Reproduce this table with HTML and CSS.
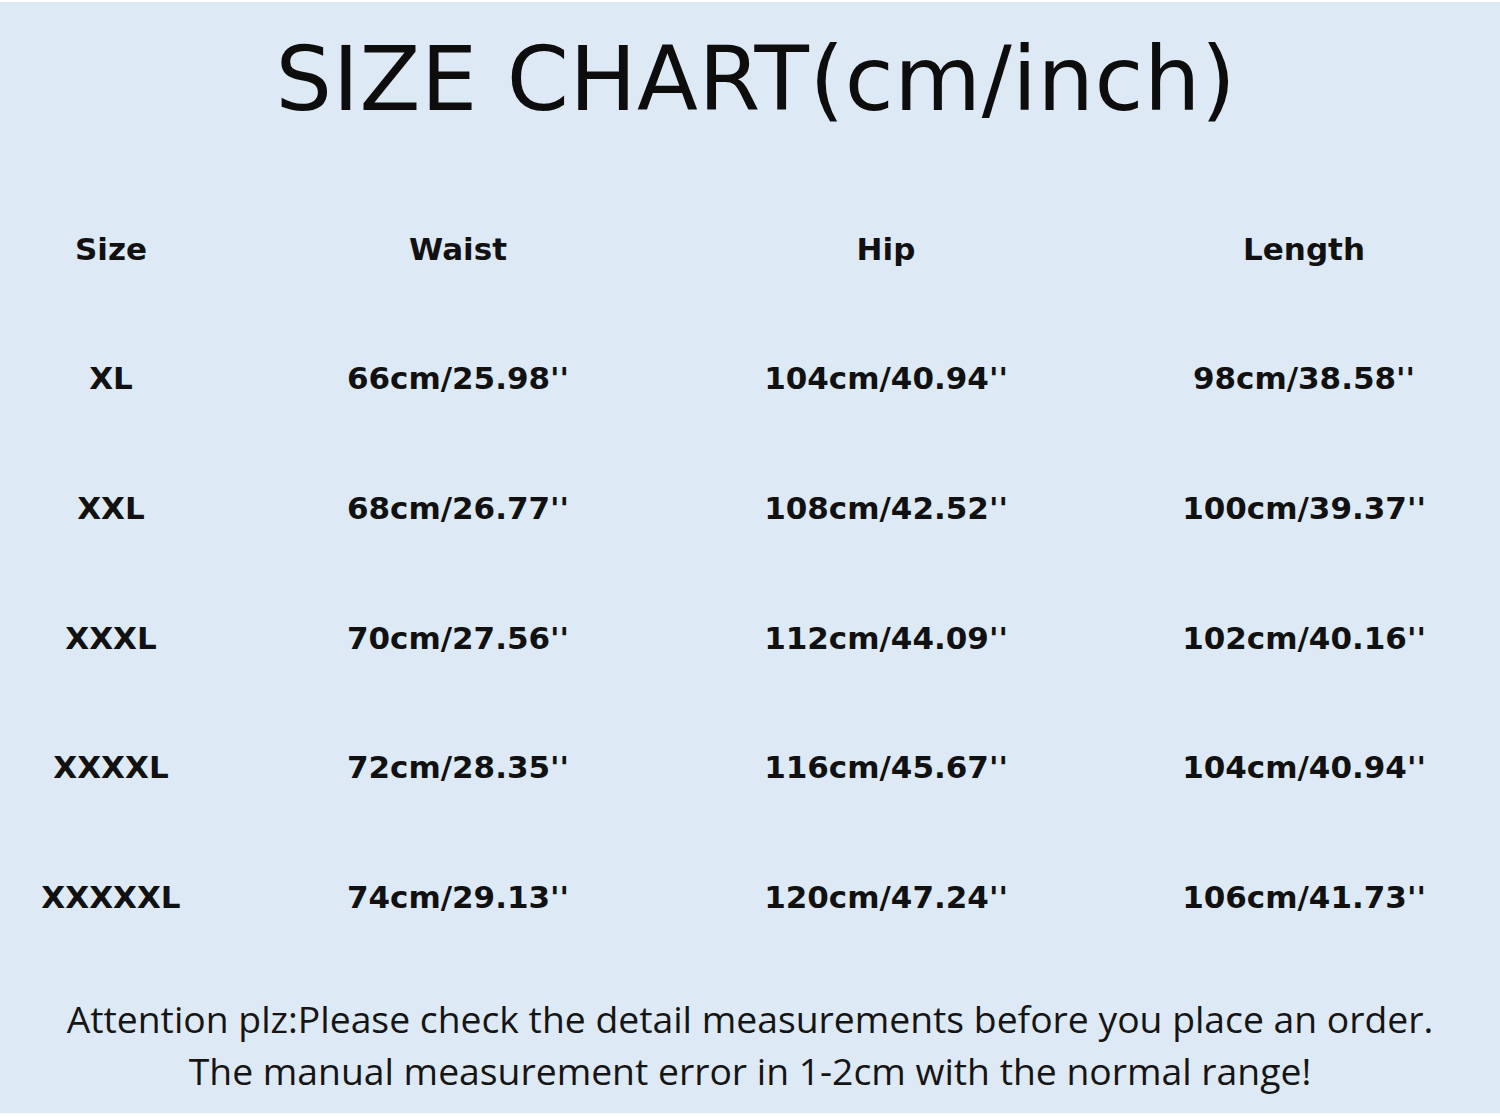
FILE: index.html
```html
<!DOCTYPE html>
<html lang="en">
<head>
<meta charset="utf-8">
<title>Size Chart</title>
<link rel="stylesheet" href="styles.css">
</head>
<body>
<main class="sheet">
  <h1 class="title">SIZE CHART(cm/inch)</h1>
  <div class="chart">
    <div class="cell head c1">Size</div>
    <div class="cell head c2">Waist</div>
    <div class="cell head c3">Hip</div>
    <div class="cell head c4">Length</div>

    <div class="cell c1">XL</div>
    <div class="cell c2">66cm/25.98''</div>
    <div class="cell c3">104cm/40.94''</div>
    <div class="cell c4">98cm/38.58''</div>

    <div class="cell c1">XXL</div>
    <div class="cell c2">68cm/26.77''</div>
    <div class="cell c3">108cm/42.52''</div>
    <div class="cell c4">100cm/39.37''</div>

    <div class="cell c1">XXXL</div>
    <div class="cell c2">70cm/27.56''</div>
    <div class="cell c3">112cm/44.09''</div>
    <div class="cell c4">102cm/40.16''</div>

    <div class="cell c1">XXXXL</div>
    <div class="cell c2">72cm/28.35''</div>
    <div class="cell c3">116cm/45.67''</div>
    <div class="cell c4">104cm/40.94''</div>

    <div class="cell c1">XXXXXL</div>
    <div class="cell c2">74cm/29.13''</div>
    <div class="cell c3">120cm/47.24''</div>
    <div class="cell c4">106cm/41.73''</div>
  </div>
  <p class="note">Attention plz:Please check the detail measurements before you place an order.<br>The manual measurement error in 1-2cm with the normal range!</p>
</main>
</body>
</html>
```
FILE: styles.css
```css
html, body {
  margin: 0;
  padding: 0;
  background: #ffffff;
}

.sheet {
  margin-top: 2px;
  height: 1111px;
  background: #dde9f4;
  display: flex;
  flex-direction: column;
  overflow: hidden;
}

.title {
  margin: 0;
  height: 150px;
  line-height: 154px;
  text-align: center;
  font-family: "Segoe Print", "DejaVu Sans", sans-serif;
  font-weight: normal;
  font-size: 89px;
  letter-spacing: 0.6px;
  color: #0d0d0d;
  padding-left: 12px;
}

.chart {
  margin-top: 32px;
  display: grid;
  grid-template-columns: 222px 472px 384px 422px;
  grid-auto-rows: 129.6px;
  font-family: "DejaVu Sans", Verdana, sans-serif;
  font-weight: bold;
  font-size: 31px;
  color: #111111;
}

.cell {
  display: flex;
  align-items: center;
  justify-content: center;
  white-space: nowrap;
}

.c4 {
  padding-left: 30px;
}

.note {
  margin: 31px 0 0;
  text-align: center;
  font-family: "Open Sans", "Noto Sans", sans-serif;
  font-size: 37.3px;
  line-height: 52px;
  color: #151515;
}
```
